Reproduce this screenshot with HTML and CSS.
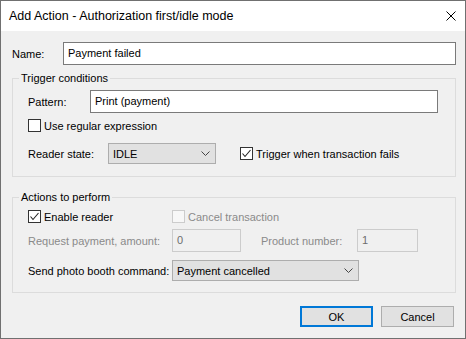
FILE: index.html
```html
<!DOCTYPE html>
<html lang="en">
<head>
    <meta charset="UTF-8">
    <title>Add Action - Authorization first/idle mode</title>
    <link rel="stylesheet" href="styles.css">
</head>
<body>

    <div class="dialog">
        <!-- Title bar -->
        <div class="titlebar">
            <span class="title">Add Action - Authorization first/idle mode</span>
            <svg class="close" width="10" height="10" viewBox="0 0 10 10">
                <path d="M0.5 0.5 L9.5 9.5 M9.5 0.5 L0.5 9.5" stroke="#000" stroke-width="1" fill="none"/>
            </svg>
        </div>

        <div class="content">
            <!-- Name -->
            <div class="row name-row">
                <span class="lbl name-lbl">Name:</span>
                <div class="textbox name-box">Payment failed</div>
            </div>

            <!-- Trigger conditions -->
            <fieldset class="group trigger">
                <legend>Trigger conditions</legend>
                <div class="group-body">
                    <div class="row pattern-row">
                        <span class="lbl pattern-lbl">Pattern:</span>
                        <div class="textbox pattern-box">Print (payment)</div>
                    </div>
                    <div class="row check-row regex-row">
                        <span class="check"></span>
                        <span>Use regular expression</span>
                    </div>
                    <div class="row state-row">
                        <span class="lbl state-lbl">Reader state:</span>
                        <div class="combo state-combo">
                            <span>IDLE</span>
                            <svg class="chevron" width="9" height="5" viewBox="0 0 9 5"><path d="M0.5 0.5 L4.5 4.5 L8.5 0.5" stroke="#444" fill="none"/></svg>
                        </div>
                        <span class="check checked fails-check">
                            <svg width="11" height="11" viewBox="0 0 11 11"><path d="M1.5 5.5 L4 8.5 L9.5 2" stroke="#222" stroke-width="1.1" fill="none"/></svg>
                        </span>
                        <span>Trigger when transaction fails</span>
                    </div>
                </div>
            </fieldset>

            <!-- Actions to perform -->
            <fieldset class="group actions">
                <legend>Actions to perform</legend>
                <div class="group-body">
                    <div class="row check-row enable-row">
                        <div class="col-first">
                            <span class="check checked">
                                <svg width="11" height="11" viewBox="0 0 11 11"><path d="M1.5 5.5 L4 8.5 L9.5 2" stroke="#222" stroke-width="1.1" fill="none"/></svg>
                            </span>
                            <span>Enable reader</span>
                        </div>
                        <span class="check disabled"></span>
                        <span class="muted">Cancel transaction</span>
                    </div>
                    <div class="row amount-row">
                        <span class="col-first muted">Request payment, amount:</span>
                        <div class="textbox disabled amount-box">0</div>
                        <span class="muted product-lbl">Product number:</span>
                        <div class="textbox disabled product-box">1</div>
                    </div>
                    <div class="row send-row">
                        <span class="col-first">Send photo booth command:</span>
                        <div class="combo send-combo">
                            <span>Payment cancelled</span>
                            <svg class="chevron" width="9" height="5" viewBox="0 0 9 5"><path d="M0.5 0.5 L4.5 4.5 L8.5 0.5" stroke="#444" fill="none"/></svg>
                        </div>
                    </div>
                </div>
            </fieldset>

            <!-- Buttons -->
            <div class="buttons">
                <button class="btn default">OK</button>
                <button class="btn">Cancel</button>
            </div>
        </div>
    </div>

</body>
</html>
```

FILE: styles.css
```css
* {
    margin: 0;
    padding: 0;
    box-sizing: border-box;
}

body {
    font-family: 'Liberation Sans', Arial, sans-serif;
    font-size: 11px;
    color: #000;
    background-color: #f0f0f0;
}

.dialog {
    width: 466px;
    height: 339px;
    border: 1px solid #707070;
    background-color: #f0f0f0;
    display: flex;
    flex-direction: column;
}

/* Title bar */
.titlebar {
    height: 30px;
    background-color: #fff;
    display: flex;
    align-items: center;
    justify-content: space-between;
    padding: 0 9px 0 8px;
}

.title {
    font-size: 12.5px;
    line-height: 30px;
}

.close {
    display: block;
    margin-top: -1px;
}

.content {
    flex: 1;
    padding: 0 9px 0 11px;
}

.row {
    display: flex;
    align-items: center;
}

/* Text boxes */
.textbox {
    height: 23px;
    line-height: 21px;
    border: 1px solid #7a7a7a;
    background-color: #fff;
    padding-left: 4px;
    white-space: nowrap;
}

.textbox.disabled {
    border-color: #cccccc;
    background-color: #f0f0f0;
    color: #6d6d6d;
}

.name-row {
    margin-top: 11px;
}

.name-lbl {
    width: 51px;
}

.name-box {
    flex: 1;
}

/* Group boxes */
.group {
    border: 1px solid #dcdcdc;
    padding: 0 17px 0 6px;
}

.group legend {
    padding: 0 2px;
    line-height: 16px;
}

.group-body {
    padding-left: 9px;
}

.trigger {
    margin-top: 5px;
    padding-bottom: 12px;
}

.pattern-row {
    margin-top: 4px;
}

.pattern-lbl {
    width: 62px;
}

.pattern-box {
    flex: 1;
}

.check-row {
    height: 15px;
}

.regex-row {
    margin-top: 5px;
}

.state-row {
    margin-top: 10px;
}

.state-lbl {
    width: 80px;
}

/* Combo boxes */
.combo {
    height: 21px;
    border: 1px solid #adadad;
    background-color: #e1e1e1;
    display: flex;
    align-items: center;
    justify-content: space-between;
    padding: 0 5px 0 4px;
}

.state-combo {
    width: 108px;
}

.chevron {
    display: block;
}

/* Check boxes */
.check {
    width: 13px;
    height: 13px;
    border: 1px solid #333;
    background-color: #fff;
    margin-right: 3px;
    display: flex;
    align-items: center;
    justify-content: center;
    flex-shrink: 0;
}

.check.disabled {
    border-color: #cccccc;
    background-color: #f7f7f7;
}

.fails-check {
    margin-left: 24px;
}

.muted {
    color: #8a8a8a;
}

/* Actions group */
.actions {
    margin-top: 12px;
    padding-bottom: 11px;
}

.col-first {
    width: 144px;
    display: flex;
    align-items: center;
    flex-shrink: 0;
}

.enable-row {
    margin-top: 4px;
}

.amount-row {
    margin-top: 5px;
}

.amount-box {
    width: 69px;
}

.product-lbl {
    margin-left: 20px;
    width: 96px;
}

.product-box {
    width: 61px;
}

.send-row {
    margin-top: 8px;
}

.send-combo {
    width: 187px;
}

/* Buttons */
.buttons {
    display: flex;
    justify-content: flex-end;
    gap: 8px;
    margin-top: 13px;
    padding-right: 2px;
}

.btn {
    width: 73px;
    height: 21px;
    font-family: inherit;
    font-size: 11px;
    background-color: #e1e1e1;
    border: 1px solid #adadad;
}

.btn.default {
    border: 2px solid #0078d7;
}
```
